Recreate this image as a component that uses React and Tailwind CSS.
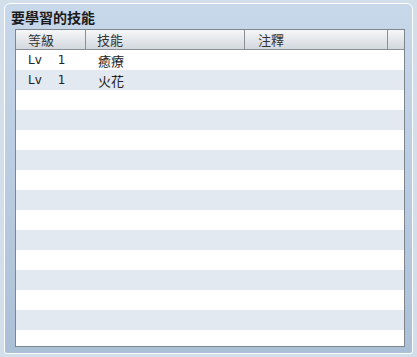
import React from "react";

const skills = [
  { lv: "1", name: "癒療", note: "" },
  { lv: "1", name: "火花", note: "" },
];

const font = { fontFamily: '"Noto Sans CJK TC", "Noto Sans", sans-serif' };

export default function App() {
  const rows = Array.from({ length: 15 }, (_, i) => skills[i] || null);

  return (
    <div className="w-[417px] h-[357px] bg-[#d2deea] pt-[3px] pl-[4px] pr-[4px] pb-[3px]" style={font}>
      <div className="h-full flex flex-col rounded-t-[6px] rounded-b-[3px] border border-white bg-gradient-to-b from-[#c8d8eb] to-[#abc0d7] pl-[10px] pr-[7px] pb-[6px]">
        <div className="h-[25px] shrink-0 flex items-center -ml-[4px] text-[14px] font-bold text-[#1a1a1a] leading-none">
          要學習的技能
        </div>
        <div className="flex-1 min-h-0 flex flex-col border border-[#7f858c] bg-white overflow-hidden">
          {/* header */}
          <div className="h-[20px] shrink-0 flex border-b border-[#8a9097] bg-gradient-to-b from-[#f6f7f8] to-[#d3d8de] text-[13px] text-[#333] leading-none">
            <div className="w-[70px] flex items-center pl-[12px] border-r border-[#8a9097]">等級</div>
            <div className="w-[159px] flex items-center pl-[11px] border-r border-[#8a9097]">技能</div>
            <div className="w-[143px] flex items-center pl-[13px] border-r border-[#8a9097]">注釋</div>
            <div className="flex-1" />
          </div>
          {rows.map((r, i) => (
            <div
              key={i}
              className={`h-[20px] shrink-0 flex text-[13px] text-[#222] leading-none ${i % 2 === 1 ? "bg-[#e3e9f1]" : "bg-white"}`}
            >
              <div className="w-[70px] flex items-center pl-[12px]" style={{ fontFamily: '"DejaVu Sans", sans-serif', fontSize: "12px" }}>
                {r && (
                  <>
                    <span>Lv</span>
                    <span className="ml-[16px]">{r.lv}</span>
                  </>
                )}
              </div>
              <div className="w-[160px] flex items-center pl-[12px]">{r ? r.name : ""}</div>
              <div className="flex-1 flex items-center pl-[13px]">{r ? r.note : ""}</div>
            </div>
          ))}
        </div>
      </div>
    </div>
  );
}
